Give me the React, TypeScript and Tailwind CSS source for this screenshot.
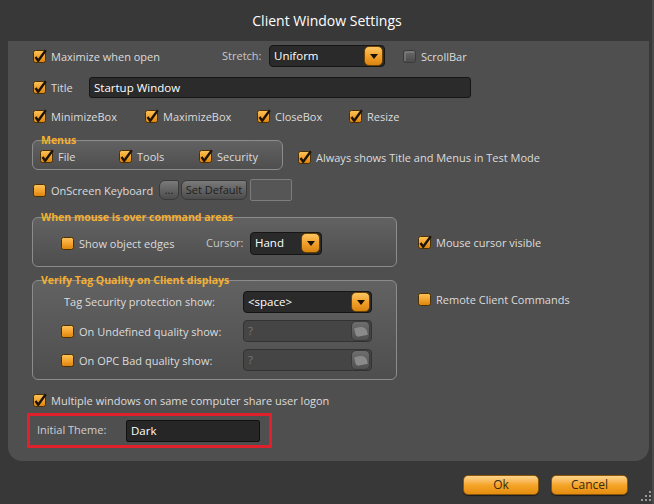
import React from "react";

const font = { fontFamily: '"Open Sans", "Noto Sans", sans-serif' };

function Check({ checked = true, grey = false }: { checked?: boolean; grey?: boolean }) {
  // 15x15 svg; box sits at 1..14
  const id = grey ? "gg" : "og";
  return (
    <svg width="15" height="15" viewBox="0 0 15 15" className="shrink-0">
      <defs>
        <linearGradient id={id} x1="0" y1="0" x2="0" y2="1">
          {grey ? (
            <>
              <stop offset="0" stopColor="#6a6a6a" />
              <stop offset="1" stopColor="#4a4a4a" />
            </>
          ) : (
            <>
              <stop offset="0" stopColor="#fcc45a" />
              <stop offset="0.55" stopColor="#f2a12a" />
              <stop offset="1" stopColor="#d8820e" />
            </>
          )}
        </linearGradient>
      </defs>
      <rect x="1.5" y="1.5" width="12" height="12" rx="2" fill={`url(#${id})`} stroke={grey ? "#3a3a3a" : "#4a3006"} strokeWidth="1" />
      {grey && <path d="M3 12 L3 5 Q3 3 5 3 L12 3" stroke="#8a8a8a" strokeWidth="1" fill="none" />}
      {checked && (
        <path d="M3.5 8 L6.2 11.8 L13.8 1.2" stroke="#1c1408" strokeWidth="2.4" fill="none" strokeLinejoin="round" />
      )}
    </svg>
  );
}

function Item({ label, checked = true, grey = false, className = "" }: { label: string; checked?: boolean; grey?: boolean; className?: string }) {
  return (
    <div className={`flex items-center gap-[4px] ${className}`}>
      <Check checked={checked} grey={grey} />
      <span className="text-[11px] leading-[15px] text-[#dcdcdc] whitespace-nowrap">{label}</span>
    </div>
  );
}

function Arrow({ disabled = false }: { disabled?: boolean }) {
  if (disabled) {
    return (
      <div className="w-[19px] h-[20px] rounded-[5px] bg-gradient-to-b from-[#6e6e6e] to-[#505050] border border-[#3a3a3a] flex items-center justify-center">
        <div className="w-[12px] h-[9px] rounded-tr-[6px] rounded-bl-[3px] bg-[#8a8a8a] -rotate-12" />
      </div>
    );
  }
  return (
    <div className="w-[19px] h-[20px] rounded-[5px] bg-gradient-to-b from-[#fcc660] via-[#f2a12a] to-[#d98510] border border-[#6a4208] flex items-center justify-center">
      <svg width="8" height="5" viewBox="0 0 8 5">
        <path d="M0 0 L8 0 L4 5 Z" fill="#1a1208" />
      </svg>
    </div>
  );
}

function Dropdown({ value, width, disabled = false, h = 22 }: { value: string; width: string; disabled?: boolean; h?: number }) {
  return (
    <div
      className={`${width} flex items-center justify-between rounded-[4px] border pl-[4px] pr-[1px] ${
        disabled ? "bg-[#454545] border-[#333]" : "bg-[#2a2a2a] border-[#151515]"
      }`}
      style={{ height: h }}
    >
      <span className={`text-[11.5px] ${disabled ? "text-[#777]" : "text-white"}`}>{value}</span>
      <Arrow disabled={disabled} />
    </div>
  );
}

function Group({ title, className = "", children }: { title: string; className?: string; children: React.ReactNode }) {
  return (
    <div className={`relative rounded-[6px] border border-[#8c8c8c] bg-gradient-to-b from-[#626262] to-[#4e4e4e] ${className}`}>
      <span className="absolute left-[8px] top-[-8px] text-[10.5px] font-bold text-[#f5b030] leading-[14px] whitespace-nowrap">{title}</span>
      {children}
    </div>
  );
}

function GlassButton({ label, className = "" }: { label: string; className?: string }) {
  return (
    <div
      className={`h-[20px] rounded-[6px] rounded-tr-[2px] border border-[#3a3a3a] bg-gradient-to-b from-[#7a7a7a] to-[#4c4c4c] flex items-center justify-center text-[11px] text-[#1e1e1e] ${className}`}
    >
      {label}
    </div>
  );
}

function OrangeButton({ label, className = "" }: { label: string; className?: string }) {
  return (
    <div
      className={`h-[20px] rounded-[5px] border border-[#8a560a] bg-gradient-to-b from-[#fdd48a] via-[#f5a526] to-[#e48c10] flex items-center justify-center text-[12px] text-[#3a2a10] shadow-[0_1px_1px_rgba(0,0,0,0.5)] ${className}`}
    >
      {label}
    </div>
  );
}

export default function App() {
  return (
    <div className="w-[654px] h-[504px] bg-[#383838] relative overflow-hidden" style={font}>
      {/* title */}
      <div className="h-[41px] flex items-center justify-center text-[14px] text-white">Client Window Settings</div>

      {/* settings panel */}
      <div className="ml-[8px] w-[641px] h-[420px] bg-[#4f4f4f] rounded-b-[14px] pl-[24px] pt-[4px] flex flex-col">
        {/* row 1 */}
        <div className="flex items-center h-[22px]">
          <Item label="Maximize when open" className="w-[190px]" />
          <span className="text-[11px] text-[#c8c8c8] w-[47px]">Stretch:</span>
          <Dropdown value="Uniform" width="w-[116px]" />
          <Item label="ScrollBar" checked={false} grey className="ml-[17px]" />
        </div>

        {/* row 2 */}
        <div className="flex items-center h-[21px] mt-[10px]">
          <Item label="Title" className="w-[57px]" />
          <div className="w-[382px] h-[21px] rounded-[3px] bg-[#2b2b2b] border border-[#161616] flex items-center pl-[4px] text-[11.5px] text-white">
            Startup Window
          </div>
        </div>

        {/* row 3 */}
        <div className="flex items-center h-[16px] mt-[10px]">
          <Item label="MinimizeBox" className="w-[112px]" />
          <Item label="MaximizeBox" className="w-[112px]" />
          <Item label="CloseBox" className="w-[92px]" />
          <Item label="Resize" />
        </div>

        {/* menus */}
        <div className="flex items-center h-[30px] mt-[16px]">
          <Group title="Menus" className="w-[251px] h-[30px] flex items-center pl-[6px] pt-[3px]">
            <Item label="File" className="w-[79px]" />
            <Item label="Tools" className="w-[80px]" />
            <Item label="Security" />
          </Group>
          <Item label="Always shows Title and Menus in Test Mode" className="ml-[14px] mt-[4px]" />
        </div>

        {/* onscreen keyboard */}
        <div className="flex items-center h-[22px] mt-[9px]">
          <Item label="OnScreen Keyboard" checked={false} className="w-[127px]" />
          <GlassButton label="..." className="w-[20px]" />
          <GlassButton label="Set Default" className="w-[66px] ml-[2px]" />
          <div className="w-[42px] h-[22px] ml-[3px] rounded-[2px] border border-[#7c7c7c] bg-[#565656]" />
        </div>

        {/* mouse */}
        <div className="flex items-center h-[50px] mt-[16px]">
          <Group title="When mouse is over command areas" className="w-[365px] h-[50px] flex items-center pl-[27px] pt-[2px]">
            <Item label="Show object edges" checked={false} className="w-[146px]" />
            <span className="text-[11px] text-[#c8c8c8] w-[44px]">Cursor:</span>
            <Dropdown value="Hand" width="w-[72px]" h={23} />
          </Group>
          <Item label="Mouse cursor visible" className="ml-[20px]" />
        </div>

        {/* verify tag quality */}
        <div className="flex items-start h-[100px] mt-[13px]">
          <Group title="Verify Tag Quality on Client displays" className="w-[365px] h-[100px] pt-[10px] flex flex-col gap-[7px]">
            <div className="flex items-center h-[22px]">
              <span className="text-[11px] text-[#dcdcdc] w-[210px] pl-[31px]">Tag Security protection show:</span>
              <Dropdown value="<space>" width="w-[129px]" />
            </div>
            <div className="flex items-center h-[22px] pl-[27px]">
              <Item label="On Undefined quality show:" checked={false} className="w-[183px]" />
              <Dropdown value="?" width="w-[129px]" disabled />
            </div>
            <div className="flex items-center h-[22px] pl-[27px]">
              <Item label="On OPC Bad quality show:" checked={false} className="w-[183px]" />
              <Dropdown value="?" width="w-[129px]" disabled />
            </div>
          </Group>
          <Item label="Remote Client Commands" checked={false} className="ml-[20px] mt-[12px]" />
        </div>

        {/* multiple windows */}
        <div className="flex items-center h-[16px] mt-[12px]">
          <Item label="Multiple windows on same computer share user logon" />
        </div>

        {/* initial theme */}
        <div className="-ml-[5px] mt-[5px] w-[245px] h-[35px] border-[3px] border-[#e0202c] flex items-center pl-[7px]">
          <span className="text-[11px] text-[#d0d0d0] w-[89px]">Initial Theme:</span>
          <div className="w-[134px] h-[22px] rounded-[2px] bg-[#262626] border border-[#111] flex items-center pl-[4px] text-[11.5px] text-white">
            Dark
          </div>
        </div>
      </div>

      {/* footer buttons */}
      <div className="flex justify-end gap-[12px] pr-[26px] mt-[14px]">
        <OrangeButton label="Ok" className="w-[76px]" />
        <OrangeButton label="Cancel" className="w-[77px]" />
      </div>

      {/* window edge */}
      <div className="absolute right-0 top-0 w-[2px] h-full bg-[#4a4a4a]" />

      {/* resize grip */}
      <svg width="14" height="14" viewBox="0 0 14 14" className="absolute right-[1px] bottom-[1px]">
        {[
          [11, 3],
          [11, 7],
          [7, 7],
          [11, 11],
          [7, 11],
          [3, 11],
        ].map(([x, y], i) => (
          <rect key={i} x={x - 1} y={y - 1} width="2" height="2" fill="#9a9a9a" />
        ))}
      </svg>
    </div>
  );
}
